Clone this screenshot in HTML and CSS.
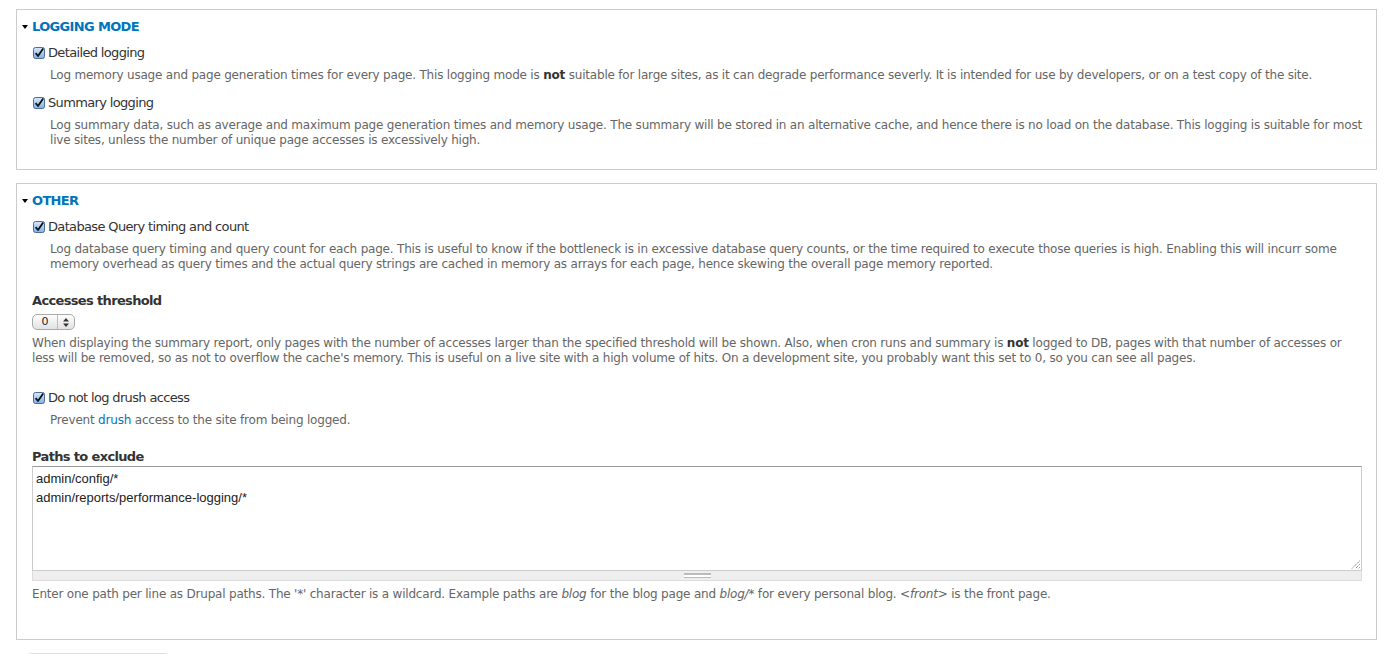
FILE: index.html
```html
<!DOCTYPE html>
<html lang="en">
<head>
  <meta charset="UTF-8" />
  <title>Performance logging settings</title>
  <link rel="stylesheet" href="styles.css">
</head>
<body>

  <form class="settings">

    <!-- Logging mode -->
    <div class="fieldset">
      <div class="legend"><span class="arrow"></span>Logging mode</div>

      <div class="form-item">
        <label class="check">
          <svg class="box" width="12" height="12" viewBox="0 0 12 12"><defs><linearGradient id="cb" x1="0" y1="0" x2="0" y2="1"><stop offset="0" stop-color="#d6e8fb"/><stop offset="1" stop-color="#7eb1e8"/></linearGradient></defs><rect x="0.5" y="0.5" width="11" height="11" rx="2" fill="url(#cb)" stroke="#4a6d99"/><path d="M2.6 6.2 L5 9 L10.2 1.4" fill="none" stroke="#111" stroke-width="1.8" stroke-linejoin="round"/></svg>
          Detailed logging
        </label>
        <div class="description">Log memory usage and page generation times for every page. This logging mode is <strong>not</strong> suitable for large sites, as it can degrade performance severly. It is intended for use by developers, or on a test copy of the site.</div>
      </div>

      <div class="form-item">
        <label class="check">
          <svg class="box" width="12" height="12" viewBox="0 0 12 12"><rect x="0.5" y="0.5" width="11" height="11" rx="2" fill="url(#cb)" stroke="#4a6d99"/><path d="M2.6 6.2 L5 9 L10.2 1.4" fill="none" stroke="#111" stroke-width="1.8" stroke-linejoin="round"/></svg>
          Summary logging
        </label>
        <div class="description">Log summary data, such as average and maximum page generation times and memory usage. The summary will be stored in an alternative cache, and hence there is no load on the database. This logging is suitable for most live sites, unless the number of unique page accesses is excessively high.</div>
      </div>
    </div>

    <!-- Other -->
    <div class="fieldset">
      <div class="legend"><span class="arrow"></span>Other</div>

      <div class="form-item">
        <label class="check">
          <svg class="box" width="12" height="12" viewBox="0 0 12 12"><rect x="0.5" y="0.5" width="11" height="11" rx="2" fill="url(#cb)" stroke="#4a6d99"/><path d="M2.6 6.2 L5 9 L10.2 1.4" fill="none" stroke="#111" stroke-width="1.8" stroke-linejoin="round"/></svg>
          Database Query timing and count
        </label>
        <div class="description">Log database query timing and query count for each page. This is useful to know if the bottleneck is in excessive database query counts, or the time required to execute those queries is high. Enabling this will incurr some memory overhead as query times and the actual query strings are cached in memory as arrays for each page, hence skewing the overall page memory reported.</div>
      </div>

      <div class="form-item item-select">
        <div class="title">Accesses threshold</div>
        <div class="select">
          <span class="value">0</span>
          <span class="spin">
            <svg width="6" height="9" viewBox="0 0 6 9"><path d="M3 0 L6 3.5 H0 Z M0 5.5 H6 L3 9 Z" fill="#333"/></svg>
          </span>
        </div>
        <div class="description flat">When displaying the summary report, only pages with the number of accesses larger than the specified threshold will be shown. Also, when cron runs and summary is <strong>not</strong> logged to DB, pages with that number of accesses or less will be removed, so as not to overflow the cache's memory. This is useful on a live site with a high volume of hits. On a development site, you probably want this set to 0, so you can see all pages.</div>
      </div>

      <div class="form-item item-drush">
        <label class="check">
          <svg class="box" width="12" height="12" viewBox="0 0 12 12"><rect x="0.5" y="0.5" width="11" height="11" rx="2" fill="url(#cb)" stroke="#4a6d99"/><path d="M2.6 6.2 L5 9 L10.2 1.4" fill="none" stroke="#111" stroke-width="1.8" stroke-linejoin="round"/></svg>
          Do not log drush access
        </label>
        <div class="description">Prevent <a href="#">drush</a> access to the site from being logged.</div>
      </div>

      <div class="form-item item-paths">
        <div class="title">Paths to exclude</div>
        <div class="textarea">
          <div class="text">admin/config/*<br>admin/reports/performance-logging/*</div>
          <svg class="resize" width="9" height="9" viewBox="0 0 9 9"><path d="M8.5 1 L1 8.5 M8.5 4.5 L4.5 8.5 M8.5 7.5 L7.5 8.5" stroke="#555" stroke-width="1" stroke-dasharray="1 1"/></svg>
        </div>
        <div class="grippie"><span></span></div>
        <div class="description flat">Enter one path per line as Drupal paths. The '*' character is a wildcard. Example paths are <em>blog</em> for the blog page and <em>blog/*</em> for every personal blog. <em>&lt;front&gt;</em> is the front page.</div>
      </div>
    </div>

    <button type="button" class="submit">Save configuration</button>
  </form>

</body>
</html>
```

FILE: styles.css
```css
body {
  font-family: 'DejaVu Sans', 'Noto Sans', sans-serif;
  font-size: 12px;
  color: #333;
  background: #fff;
  margin: 0;
  padding: 0;
  overflow: hidden;
}

.settings {
  padding: 9px 18px 0 16px;
}

.fieldset {
  border: 1px solid #ccc;
  padding: 8px 14px 21px 15px;
  margin-bottom: 13px;
}

.legend {
  position: relative;
  font-size: 13px;
  font-weight: bold;
  line-height: 18px;
  text-transform: uppercase;
  color: #0074bd;
  letter-spacing: -0.65px;
}

.arrow {
  position: absolute;
  left: -10px;
  top: 7px;
  border-left: 3px solid transparent;
  border-right: 3px solid transparent;
  border-top: 4px solid #000;
}

.form-item {
  margin-top: 8px;
}

.form-item + .form-item {
  margin-top: 11px;
}

.check {
  display: flex;
  align-items: center;
  gap: 3px;
  font-size: 13px;
  line-height: 18px;
  color: #333;
  letter-spacing: -0.65px;
}

.box {
  margin-left: 1px;
  flex: none;
}

.description {
  margin: 6px 0 0 18px;
  line-height: 15px;
  color: #666;
  letter-spacing: -0.2px;
}

.description.flat {
  margin-left: 0;
}

.description a {
  color: #0074bd;
  text-decoration: none;
}

.description strong {
  color: #333;
}

.title {
  font-size: 13px;
  font-weight: bold;
  line-height: 18px;
  letter-spacing: -0.65px;
}

.form-item.item-select {
  margin-top: 20px;
}

.select {
  display: flex;
  width: 41px;
  height: 14px;
  margin-top: 4px;
  border: 1px solid #aaa;
  border-radius: 5px;
  background: linear-gradient(#fdfdfd, #e2e2e2);
  font-size: 11px;
}

.select .value {
  width: 24px;
  text-align: center;
  line-height: 14px;
  color: #222;
}

.select .spin {
  flex: 1;
  display: flex;
  align-items: center;
  justify-content: center;
  border-left: 1px solid #bbb;
}

.form-item.item-drush {
  margin-top: 23px;
}

.form-item.item-paths {
  margin-top: 20px;
}

.textarea {
  position: relative;
  height: 103px;
  border: 1px solid #ccc;
  border-top-color: #999;
  background: #fff;
}

.textarea .text {
  font-family: 'Liberation Sans', Arial, sans-serif;
  font-size: 13px;
  line-height: 19px;
  color: #222;
  padding: 2px 3px;
  letter-spacing: 0;
}

.resize {
  position: absolute;
  right: 1px;
  bottom: 1px;
}

.grippie {
  height: 9px;
  background: #eee;
  border: 1px solid #ddd;
  border-top: none;
  display: flex;
  justify-content: center;
  align-items: center;
}

.grippie span {
  width: 27px;
  height: 3px;
  border-top: 1px solid #bbb;
  border-bottom: 1px solid #bbb;
  background: linear-gradient(#fff 0, #fff 0.5px, #bbb 0.5px, #bbb 1.5px, #fff 1.5px);
}

.item-paths .description {
  margin-top: 6px;
}

.fieldset:last-of-type {
  padding-bottom: 37px;
}

.submit {
  margin: 0 0 0 6px;
  width: 152px;
  height: 30px;
  border: 1px solid #ddd;
  border-radius: 10px;
  background: linear-gradient(#fff, #f0f0f0);
  color: #333;
  font-family: inherit;
  font-size: 13px;
}
```
